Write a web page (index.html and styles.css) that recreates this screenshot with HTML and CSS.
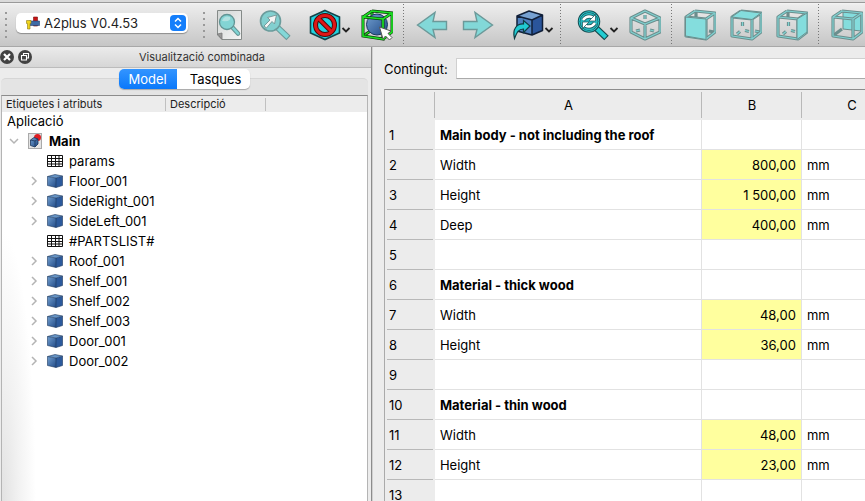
FILE: index.html
```html
<!DOCTYPE html>
<html lang="ca">
<head>
<meta charset="utf-8">
<meta name="viewport" content="width=device-width, initial-scale=1">
<title>A2plus</title>
<link rel="stylesheet" href="styles.css">
</head>
<body>
<svg class="defs" aria-hidden="true">
  <defs>
    <linearGradient id="blue" x1="0" y1="0" x2="1" y2="1"><stop offset="0" stop-color="#729fcf"/><stop offset="1" stop-color="#204a87"/></linearGradient>
    <linearGradient id="page" x1="0" y1="0" x2="1" y2="1"><stop offset="0" stop-color="#d2d6d5"/><stop offset="1" stop-color="#f4f4f4"/></linearGradient>
    <path id="frame" d="M2 8 22 10V30L2 27ZM11 2 31 4V23L22 30M2 8 11 2M22 10 31 4"/>
    <path id="ticks" d="M12.500 13V17M7 25 10 22.500M15 21.500 19 22.500M25 22 30 23"/>
    <path id="iso" d="M16 2 31 9V23L16 30 2 23V9ZM2 9 16 15 31 9M16 15V30M16 6V10M7 22 11 21M21 21 25 22"/>
    <symbol id="sheet" viewBox="0 0 16 14"><path fill="#fff" stroke="#111" d="M.5 1.500H15.500V12.500H.5ZM.5 4.500H15.500M.5 7.500H15.500M.5 10H15.500M4.500 1.500V12.500M8.500 1.500V12.500M12 1.500V12.500"/></symbol>
    <symbol id="part" viewBox="0 0 16 14"><path fill="url(#blue)" d="M.5 2.500 9 4V13.500L.5 11.500Z"/><path fill="#2c5a9c" d="M9 4 15.500 2V11.500L9 13.500Z"/><path fill="#6795c6" d="M.5 2.500 8 .5 15.500 2 9 4Z"/><path fill="none" stroke="#1b365c" stroke-width=".6" d="M.5 2.500 8 .5 15.500 2V11.500L9 13.500 .5 11.500ZM.5 2.500 9 4 15.500 2M9 4V13.500"/></symbol>
    <symbol id="drop" viewBox="0 0 10 6"><path fill="none" stroke="#222" stroke-width="1.800" d="M1.500 1 5 4.500 8.500 1"/></symbol>
    <symbol id="arrow" viewBox="0 0 32 32"><path fill="#82d8d8" stroke="#6c9999" stroke-width="1.400" d="M1.500 16 19 3.500 17 12.500H30.500V20.500H17L19 28.500Z"/></symbol>
    <symbol id="more" viewBox="0 0 8 10"><path fill="none" stroke="#b4b4b4" stroke-width="1.500" d="M2 1 6 5 2 9"/></symbol>
  </defs>
</svg>

<header class="toolbar">
  <span class="grip"></span>
  <div class="workbench">
    <svg class="workbench-icon" viewBox="0 0 14 14"><path fill="#c81414" stroke="#7b1010" stroke-width=".6" d="M7.500 1H11.500V10H7.500Z"/><path fill="#3f6ba6" stroke="#20406d" stroke-width=".6" d="M3 5H13.500V9.500H3Z"/><path fill="#f0d41c" stroke="#8d7b10" stroke-width=".6" d="M.5 4.500H5V7.500H4V13H1.500V7.500H.5Z"/></svg>
    <select aria-label="Banc de treball"><option>A2plus V0.4.53</option></select>
    <svg class="stepper" viewBox="0 0 16 16"><rect width="16" height="16" rx="4" fill="#147efb"/><path fill="none" stroke="#fff" stroke-width="1.500" d="M5 6.500 8 3.500 11 6.500M5 9.500 8 12.500 11 9.500"/></svg>
  </div>
  <span class="grip"></span>
  <button class="tool" aria-label="Ajusta-ho tot"><svg viewBox="0 0 32 32"><path fill="url(#page)" stroke="#858a88" d="M4.500 1.500H28.500V30.500H9L4.500 26Z"/><path fill="#999" stroke="#777" stroke-width=".8" d="M4.500 25 9 24V30.500Z"/><path stroke="#669494" stroke-width="4.500" stroke-linecap="round" d="M19.500 18.500 25 24.500"/><path stroke="#7ed4d4" stroke-width="2.500" stroke-linecap="round" d="M19.500 18.500 25 24.500"/><circle cx="14" cy="13" r="7.500" fill="#83d4d4" stroke="#629494" stroke-width="1.300"/><path fill="#b2e2e1" d="M9 12Q11 6 17 8 19 13 9 12"/></svg></button>
  <button class="tool" aria-label="Ajusta la selecció"><svg viewBox="0 0 32 32"><path stroke="#6b9898" stroke-width="6" d="M18.500 18.500 29.500 29"/><path stroke="#83d8d8" stroke-width="4" d="M19 19 28.800 28.300"/><circle cx="11.500" cy="12" r="10" fill="#82cfcf" stroke="#6b9c9c" stroke-width="1.600"/><path fill="#f4f4f4" stroke="#789b9b" d="M5 17 11 11 8.500 8.500 17.500 6 15.500 15 13 12.500 7.500 19Z"/></svg></button>
  <button class="tool menu" aria-label="Estil de dibuix"><svg viewBox="0 0 32 32"><path fill="#22d3df" stroke="#14454b" stroke-width="1.600" d="M16 1.500 30.500 8V24L16 30.500 1.500 24V8Z"/><g fill="none"><circle cx="16" cy="16" r="9.500" stroke="#4b0b0b" stroke-width="5"/><path stroke="#4b0b0b" stroke-width="5" d="M9.500 9.500 22.500 22.500"/><circle cx="16" cy="16" r="9.500" stroke="#e01616" stroke-width="3"/><path stroke="#e01616" stroke-width="3" d="M9.500 9.500 22.500 22.500"/></g></svg><svg class="drop"><use href="#drop"/></svg></button>
  <button class="tool" aria-label="Selecció"><svg viewBox="0 0 32 32"><path fill="none" stroke="#083b08" stroke-width="3" d="M11 2V21L2 27M11 21 30 23"/><path fill="none" stroke="#20d820" stroke-width="1.500" d="M11 2V21L2 27M11 21 30 23"/><circle cx="16" cy="15.500" r="10.500" fill="url(#blue)" stroke="#16365f"/><use href="#frame" fill="none" stroke="#083b08" stroke-width="3"/><use href="#frame" fill="none" stroke="#1ddf24" stroke-width="1.700"/><path fill="#fff" stroke="#555" d="M18.500 18 30 22 27 24.500 31 28.500 28.500 31 24.500 27 22 30Z"/></svg></button>
  <span class="divider"></span>
  <button class="tool" aria-label="Enrere"><svg><use href="#arrow"/></svg></button>
  <button class="tool" aria-label="Endavant"><svg class="flip"><use href="#arrow"/></svg></button>
  <button class="tool menu" aria-label="Vés a l'objecte enllaçat"><svg viewBox="0 0 32 32"><path fill="#4e80be" d="M5 7 20 11V26L5 22Z"/><path fill="#2a559b" d="M20 11 30.500 6V21.500L20 26Z"/><path fill="#76a1d2" d="M5 7 17 2 30.500 6 20 11Z"/><path fill="none" stroke="#101f38" stroke-width="1.500" stroke-linejoin="round" d="M5 7 17 2 30.500 6V21.500L20 26 5 22ZM5 7 20 11 30.500 6M20 11V26"/><path fill="#21cbd2" stroke="#103c42" stroke-width="1.200" d="M2.500 29.500C0 20 5 14.500 11.500 15V11.500L18 17 11.500 23.500V20C6.500 20 5 23 2.500 29.500Z"/></svg><svg class="drop"><use href="#drop"/></svg></button>
  <span class="divider"></span>
  <button class="tool menu" aria-label="Sincronitza la vista"><svg viewBox="0 0 32 32"><path stroke="#12484c" stroke-width="6.500" d="M18.500 18.500 29.500 29"/><path stroke="#22cdd2" stroke-width="4" d="M19 19 28.800 28.300"/><circle cx="12" cy="12.500" r="10" fill="#28b9bf" stroke="#164f54" stroke-width="2.500"/><circle cx="12" cy="12.500" r="9.800" fill="none" stroke="#2bd0d4"/><path fill="none" stroke="#185257" stroke-width="4" d="M6 11Q10 5.500 16 8.500M18 14Q14 19.500 8 16.500"/><path fill="none" stroke="#fff" stroke-width="2.500" d="M6 11Q10 5.500 16 8.500M18 14Q14 19.500 8 16.500"/><path fill="#fff" stroke="#185257" stroke-width=".7" d="M18.500 5.500V12H12ZM5.500 19.500V13H12Z"/></svg><svg class="drop"><use href="#drop"/></svg></button>
  <button class="tool" aria-label="Isomètrica"><svg viewBox="0 0 32 32"><use href="#iso" class="tube-edge"/><use href="#iso" class="tube"/></svg></button>
  <span class="divider"></span>
  <button class="tool" aria-label="Frontal"><svg viewBox="0 0 32 32"><path class="tube-edge" d="M12 3V8M25 22 30 23"/><use href="#frame" class="tube-edge"/><use href="#frame" class="tube"/><path class="face" d="M1.500 8 22 10V30.500L1.500 27Z"/></svg></button>
  <button class="tool" aria-label="Superior"><svg viewBox="0 0 32 32"><use href="#ticks" class="tube-edge"/><use href="#ticks" class="tube"/><use href="#frame" class="tube-edge"/><use href="#frame" class="tube"/><path class="face" d="M1.500 8 11 1.500 31 4 22 10.500Z"/></svg></button>
  <button class="tool" aria-label="Dreta"><svg viewBox="0 0 32 32"><path class="tube-edge" d="M12 3V8"/><use href="#ticks" class="tube-edge"/><use href="#ticks" class="tube"/><use href="#frame" class="tube-edge"/><use href="#frame" class="tube"/><path class="face" d="M21 10 31 4V23L21 30.500Z"/></svg></button>
  <span class="divider"></span>
  <button class="tool" aria-label="Posterior"><svg viewBox="0 0 32 32"><path class="face" d="M12 3 30 4V22L12 20Z"/><path class="tube-edge" d="M3 26 11 20"/><use href="#frame" class="tube-edge"/><use href="#frame" class="tube"/></svg></button>
</header>

<div class="workspace">
  <aside class="dock">
    <div class="dock-title">
      <button class="round" aria-label="Tanca"><svg viewBox="0 0 14 14"><circle cx="7" cy="7" r="7" fill="#424242"/><path stroke="#fff" stroke-width="2.200" d="M4 4 10 10M10 4 4 10"/></svg></button>
      <button class="round" aria-label="Desacobla"><svg viewBox="0 0 14 14"><circle cx="7" cy="7" r="7" fill="#424242"/><path fill="none" stroke="#fff" stroke-width="1.100" d="M5.500 5.500V3.500H10.500V8H8.500M3.500 5.500H8.500V10H3.500Z"/></svg></button>
      <h2>Visualització combinada</h2>
    </div>
    <div class="tabs" role="tablist">
      <button class="tab active" role="tab" aria-selected="true">Model</button>
      <button class="tab" role="tab" aria-selected="false">Tasques</button>
    </div>
    <div class="tab-page">
      <div class="tree">
        <div class="tree-head"><span>Etiquetes i atributs</span><span>Descripció</span><span></span></div>
        <div class="tree-root">Aplicació</div>
        <div class="tree-doc">
          <button class="twist" aria-label="Plega"><svg class="open"><use href="#more"/></svg></button>
          <svg class="doc-icon" viewBox="0 0 14 16"><rect x=".5" y=".5" width="13" height="15" fill="#e4e4e4" stroke="#aaa"/><circle cx="9.500" cy="4.500" r="3.500" fill="#de1d22"/><path fill="url(#blue)" stroke="#1b365c" stroke-width=".8" d="M2.500 7 6 4.500 10 6V11L7 14 2.500 12.500Z"/><path fill="none" stroke="#1b365c" stroke-width=".8" d="M2.500 7 7 8 10 6M7 8V14"/></svg>
          <strong>Main</strong>
        </div>
        <ul>
          <li><span class="twist"></span><svg class="item-icon"><use href="#sheet"/></svg>params</li>
          <li><button class="twist" aria-label="Desplega"><svg><use href="#more"/></svg></button><svg class="item-icon"><use href="#part"/></svg>Floor_001</li>
          <li><button class="twist" aria-label="Desplega"><svg><use href="#more"/></svg></button><svg class="item-icon"><use href="#part"/></svg>SideRight_001</li>
          <li><button class="twist" aria-label="Desplega"><svg><use href="#more"/></svg></button><svg class="item-icon"><use href="#part"/></svg>SideLeft_001</li>
          <li><span class="twist"></span><svg class="item-icon"><use href="#sheet"/></svg>#PARTSLIST#</li>
          <li><button class="twist" aria-label="Desplega"><svg><use href="#more"/></svg></button><svg class="item-icon"><use href="#part"/></svg>Roof_001</li>
          <li><button class="twist" aria-label="Desplega"><svg><use href="#more"/></svg></button><svg class="item-icon"><use href="#part"/></svg>Shelf_001</li>
          <li><button class="twist" aria-label="Desplega"><svg><use href="#more"/></svg></button><svg class="item-icon"><use href="#part"/></svg>Shelf_002</li>
          <li><button class="twist" aria-label="Desplega"><svg><use href="#more"/></svg></button><svg class="item-icon"><use href="#part"/></svg>Shelf_003</li>
          <li><button class="twist" aria-label="Desplega"><svg><use href="#more"/></svg></button><svg class="item-icon"><use href="#part"/></svg>Door_001</li>
          <li><button class="twist" aria-label="Desplega"><svg><use href="#more"/></svg></button><svg class="item-icon"><use href="#part"/></svg>Door_002</li>
        </ul>
      </div>
    </div>
  </aside>

  <main class="sheet">
    <div class="content-row">
      <label for="content">Contingut:</label>
      <input id="content" type="text">
    </div>
    <div class="grid">
      <table>
        <colgroup><col class="col-num"><col class="col-a"><col class="col-b"><col class="col-c"></colgroup>
        <thead><tr><td></td><th scope="col">A</th><th scope="col">B</th><th scope="col">C</th></tr></thead>
        <tbody>
          <tr><th scope="row">1</th><td class="bold">Main body - not including the roof</td><td></td><td></td></tr>
          <tr><th scope="row">2</th><td>Width</td><td class="value">800,00</td><td>mm</td></tr>
          <tr><th scope="row">3</th><td>Height</td><td class="value">1 500,00</td><td>mm</td></tr>
          <tr><th scope="row">4</th><td>Deep</td><td class="value">400,00</td><td>mm</td></tr>
          <tr><th scope="row">5</th><td></td><td></td><td></td></tr>
          <tr><th scope="row">6</th><td class="bold">Material - thick wood</td><td></td><td></td></tr>
          <tr><th scope="row">7</th><td>Width</td><td class="value">48,00</td><td>mm</td></tr>
          <tr><th scope="row">8</th><td>Height</td><td class="value">36,00</td><td>mm</td></tr>
          <tr><th scope="row">9</th><td></td><td></td><td></td></tr>
          <tr><th scope="row">10</th><td class="bold">Material - thin wood</td><td></td><td></td></tr>
          <tr><th scope="row">11</th><td>Width</td><td class="value">48,00</td><td>mm</td></tr>
          <tr><th scope="row">12</th><td>Height</td><td class="value">23,00</td><td>mm</td></tr>
          <tr><th scope="row">13</th><td></td><td></td><td></td></tr>
        </tbody>
      </table>
    </div>
  </main>
</div>
</body>
</html>
```
FILE: styles.css
```css
* { box-sizing: border-box; }

body {
  margin: 0;
  height: 100vh;
  display: flex;
  flex-direction: column;
  overflow: hidden;
  background: #ececec;
  color: #000;
  font: 13px/20px Inter, "Liberation Sans", sans-serif;
}

button {
  margin: 0;
  padding: 0;
  border: 0;
  background: none;
  color: inherit;
  font: inherit;
}

svg { display: block; flex: none; }
.defs { position: absolute; width: 0; height: 0; }

/* Toolbar */
.toolbar {
  display: flex;
  align-items: center;
  flex: none;
  height: 47px;
  padding: 1px 0 0 5px;
  overflow: hidden;
  border-top: 2px solid #dadada;
  border-bottom: 1px solid #a8a8a8;
  background: linear-gradient(#999 1px, #f4f4f4 1px, #ececec 3px, #c6c6c6);
}

.grip {
  flex: none;
  width: 2px;
  height: 26px;
  background: repeating-linear-gradient(#999 0 2px, transparent 2px 6px);
}

.workbench {
  position: relative;
  display: flex;
  align-items: center;
  align-self: flex-start;
  flex: none;
  width: 172px;
  height: 20px;
  margin: 10px 15px 0 9px;
  padding-left: 10px;
  border-radius: 5px;
  background: #fff;
  box-shadow: 0 1px 1px #0005;
}
.workbench-icon { width: 14px; height: 14px; }
.workbench select {
  flex: 1;
  height: 20px;
  padding: 0 0 0 4px;
  border: 0;
  appearance: none;
  background: none;
  color: #222;
  font: inherit;
}
.stepper {
  position: absolute;
  right: 2px;
  top: 2px;
  width: 16px;
  height: 16px;
  pointer-events: none;
}

.tool { display: flex; align-items: center; flex: none; padding: 0 7px; }
.tool svg { width: 32px; height: 32px; }
.grip + .tool { margin-left: 1px; }
.tool.menu { padding: 0 3px 0 11px; }
.tool .drop { width: 10px; height: 6px; margin-top: 10px; }
.tool .flip { transform: scaleX(-1); }

.divider {
  flex: none;
  width: 1px;
  height: 41px;
  margin: 0 5px 0 3px;
  background: repeating-linear-gradient(#777 0 1px, transparent 1px 3px);
}

.tube-edge { fill: none; stroke: #6b8e8d; stroke-width: 3.2; stroke-linejoin: round; }
.tube { fill: none; stroke: #80d2d2; stroke-width: 1.2; stroke-linejoin: round; }
.face { fill: #84dddd; stroke: #6b8e8d; stroke-width: 1; }

.workspace { display: flex; flex: 1; min-height: 0; }

/* Combined view */
.dock {
  display: flex;
  flex-direction: column;
  flex: none;
  width: 43%;
  border-right: 1px solid #8c8c8c;
}

.dock-title {
  display: flex;
  align-items: center;
  flex: none;
  gap: 4px;
  height: 21px;
  padding-right: 3px;
  border-bottom: 1px solid #bcbcbc;
  background: linear-gradient(#ebebeb, #d6d6d6);
}
.round svg { width: 14px; height: 14px; }
.dock-title h2 {
  flex: 1;
  margin: 0;
  color: #333;
  font-size: 11px;
  font-weight: 400;
  text-align: center;
}

.tabs {
  z-index: 1;
  display: flex;
  align-self: center;
  flex: none;
  height: 20px;
  margin: 1px 2px 0 0;
  border-radius: 5px;
  background: #fff;
  box-shadow: 0 1px 1px #0004;
}
.tab { padding: 0 10px; border-radius: 0 5px 5px 0; }
.tab + .tab { padding: 0 9px 0 13px; }
.tab.active {
  border-radius: 5px 0 0 5px;
  background: linear-gradient(#3395ff, #0a78fa);
  color: #fff;
}

.tab-page {
  display: flex;
  flex: 1;
  min-height: 0;
  margin: -11px 3px 0 1px;
  padding-top: 16px;
  border-top: 1px solid #d6d6d6;
  border-radius: 5px 5px 0 0;
  background: #e4e4e4;
}

.tree {
  flex: 1;
  border: solid #b4b4b4;
  border-width: 1px 1px 0;
  border-top-color: #8c8c8c;
  background: radial-gradient(ellipse 34px 270px at 0 100%, #e2e2e2, #f2f2f2 50%, #fff);
}
.tree-head {
  display: flex;
  height: 16px;
  background: #ececec;
  color: #222;
  font-size: 11px;
}
.tree-head span {
  width: 100px;
  height: 13px;
  margin-top: 2px;
  padding-left: 4px;
  border-right: 1px solid #c0c0c0;
  line-height: 13px;
}
.tree-head span:first-child { width: 164px; }
.tree-head span:last-child { border: 0; }
.tree-root { padding-left: 5px; line-height: 19px; }
.tree-doc { display: flex; align-items: center; padding-left: 6px; }
.tree ul { margin: 0; padding: 0 0 0 26px; list-style: none; }
.tree li { display: flex; align-items: center; }
.twist { display: flex; justify-content: center; width: 12px; }
.twist svg { width: 8px; height: 10px; }
.twist .open { transform: rotate(90deg); }
.doc-icon { width: 14px; height: 16px; margin: 0 7px 0 8px; }
.item-icon { width: 16px; height: 14px; margin: 0 6px 0 7px; }

/* Spreadsheet */
.sheet {
  display: flex;
  flex-direction: column;
  flex: 1;
  min-width: 0;
  padding: 11px 0 0 11px;
  border-left: 1px solid #d0d0d0;
}
.content-row { display: flex; align-items: center; gap: 8px; }
.content-row input {
  flex: 1;
  min-width: 0;
  height: 21px;
  padding: 0 4px;
  border: 1px solid #d0d0d0;
  border-right: 0;
  border-bottom-color: #aaa;
  background: #fff;
  font: inherit;
}
.grid {
  flex: 1;
  min-height: 0;
  margin-top: 10px;
  overflow: hidden;
  border: solid #aaa;
  border-width: 1px 0 0 1px;
  border-top-color: #8c8c8c;
  background: #fff;
}

table { width: 517px; table-layout: fixed; border-spacing: 0; }
.col-num { width: 50px; }
.col-a { width: 267px; }
.col-b, .col-c { width: 100px; }
th { font-weight: 400; }
th, td { height: 30px; padding: 0 5px; }

thead th, thead td {
  background: linear-gradient(#b8b8b8, #b8b8b8) right 2px / 1px 26px no-repeat #ececec;
}
tbody th {
  padding: 0 4px;
  text-align: left;
  background: linear-gradient(#b8b8b8, #b8b8b8) 2px bottom / 46px 1px no-repeat #ececec;
}
tbody td { border: solid #e2e2e2; border-width: 0 1px 1px 0; }
.bold { font-weight: 700; }
.value { background: #ffff9e; text-align: right; }
```
